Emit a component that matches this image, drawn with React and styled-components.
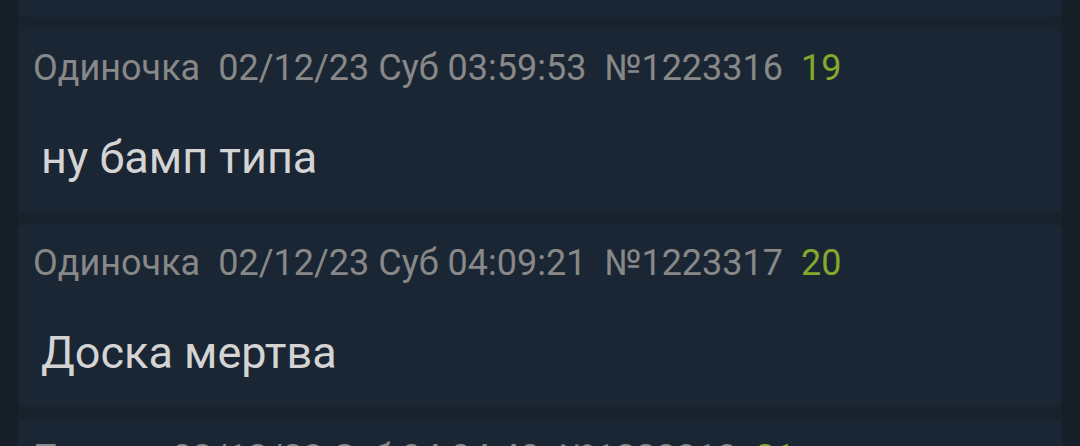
import React from 'react'
import styled, { createGlobalStyle } from 'styled-components'

const GlobalStyle = createGlobalStyle`
    html, body {
        margin: 0;
        padding: 0;
        background: #161e27;
        overflow: hidden;
    }
    body {
        font-family: Roboto, "Noto Sans", sans-serif;
    }
`;

const posts = [
    { name: 'Одиночка', date: '02/12/23 Суб 03:49:12', num: '№1223315', idx: 18, text: 'ап' },
    { name: 'Одиночка', date: '02/12/23 Суб 03:59:53', num: '№1223316', idx: 19, text: 'ну бамп типа' },
    { name: 'Одиночка', date: '02/12/23 Суб 04:09:21', num: '№1223317', idx: 20, text: 'Доска мертва' },
    { name: 'Путник', date: '02/12/23 Суб 04:04:40', num: '№1223318', idx: 21, text: 'жива' },
]

export default function App() {
    return (
        <>
            <GlobalStyle />
            <Viewport>
                <Thread>
                    {posts.map((p) => (
                        <Post key={p.num}>
                            <Meta>
                                <MetaItem>{p.name}</MetaItem>
                                <MetaItem>{p.date}</MetaItem>
                                <MetaItem>{p.num}</MetaItem>
                                <Index>{p.idx}</Index>
                            </Meta>
                            <Body>{p.text}</Body>
                        </Post>
                    ))}
                </Thread>
            </Viewport>
        </>
    )
}

// the thread is scrolled: the first post sits mostly above the window
const Viewport = styled.div`
    height: 446px;
    overflow: hidden;
    padding: 0 18px;
`;

const Thread = styled.div`
    display: flex;
    flex-direction: column;
    gap: 12px;
    background: #19222c;
    margin-top: -166px;
`;

const Post = styled.div`
    background: #1b2634;
    border-radius: 7px;
    height: 183px;
    box-sizing: border-box;
    padding: 19px 15px 0;
`;

const Meta = styled.div`
    display: flex;
    gap: 18px;
    font-size: 36px;
    line-height: 40px;
    color: #888888;
    white-space: nowrap;
`;

const MetaItem = styled.span``;

const Index = styled.span`
    color: #84a82c;
`;

const Body = styled.div`
    margin-top: 44px;
    padding-left: 8px;
    font-size: 45px;
    line-height: 52px;
    color: #d4d4d4;
`;
